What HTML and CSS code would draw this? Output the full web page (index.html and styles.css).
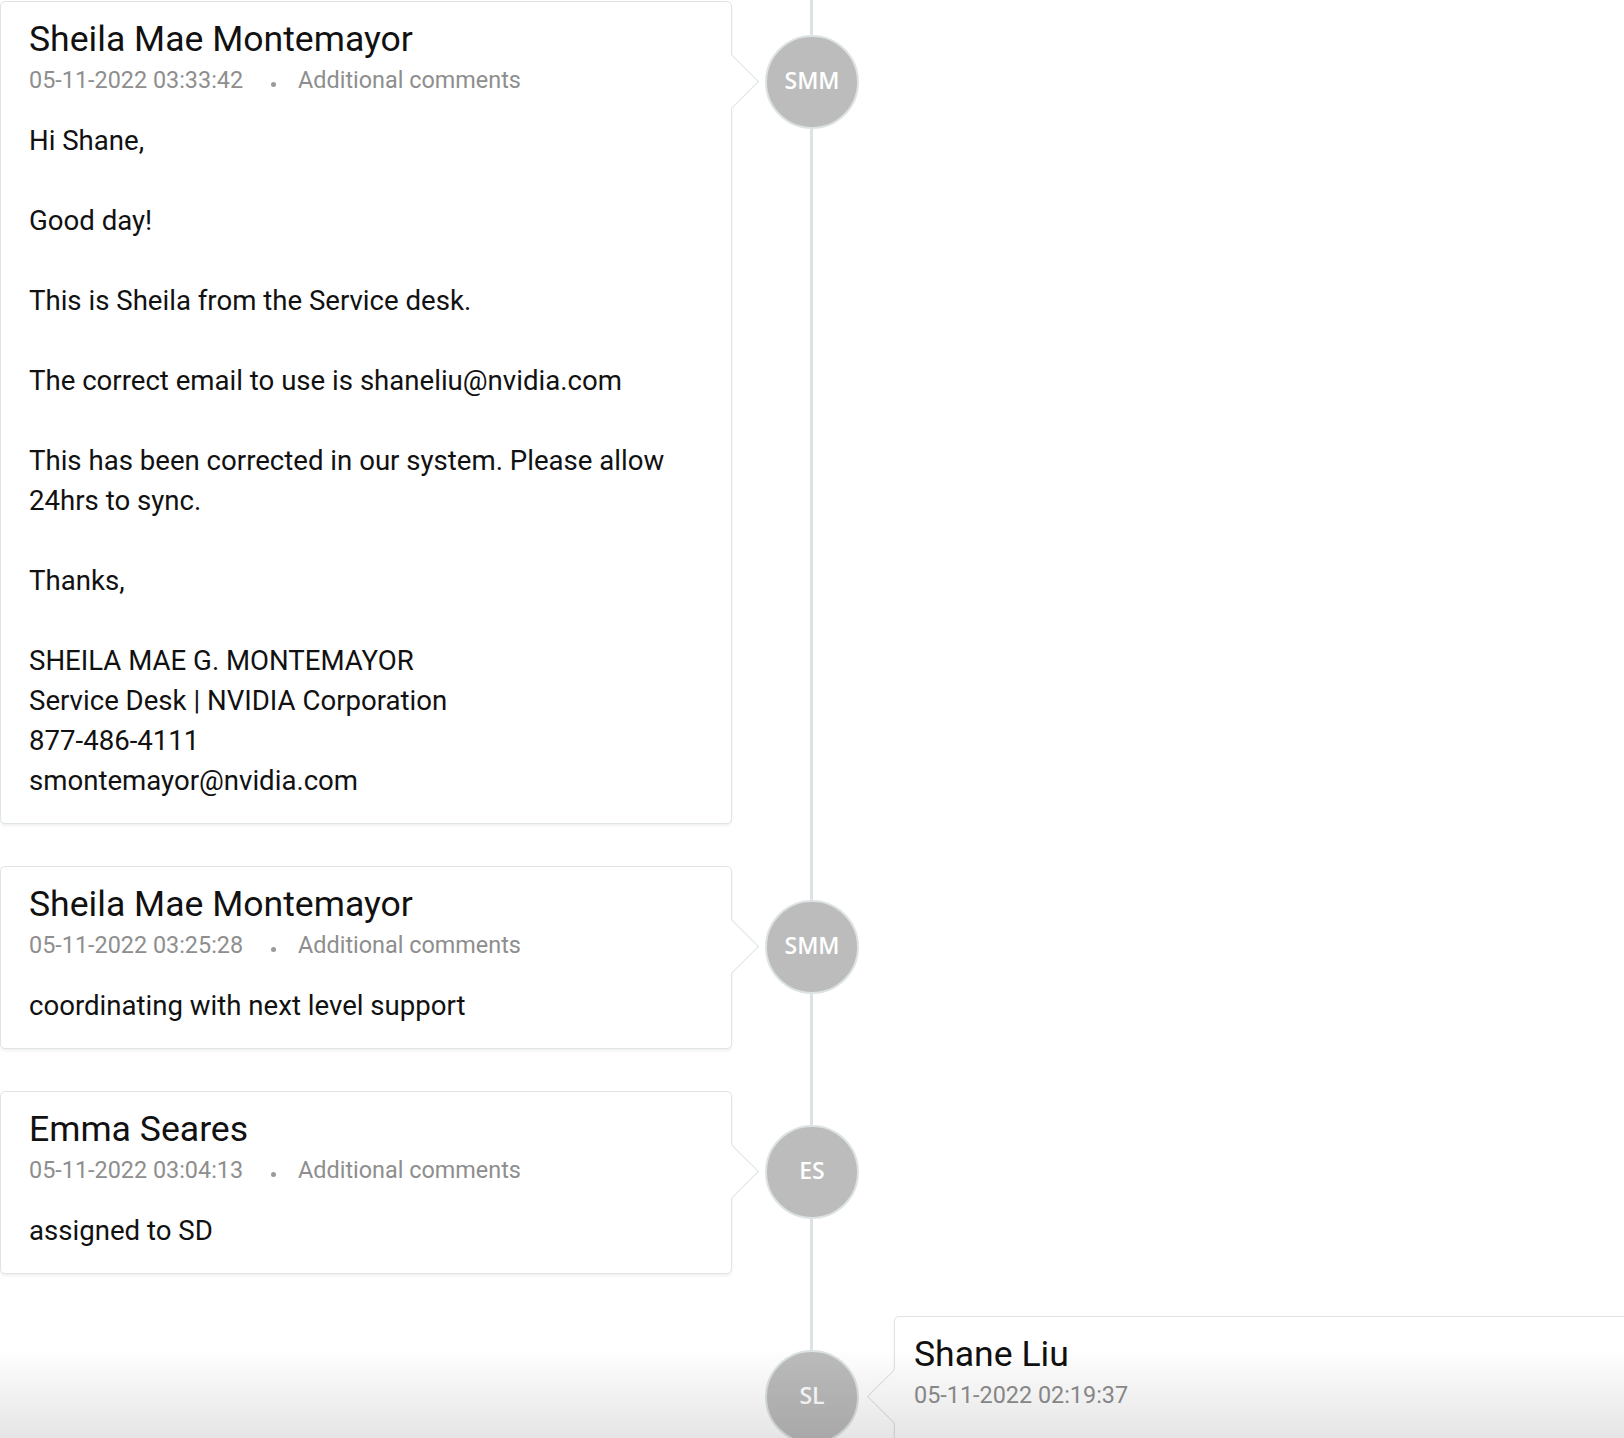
FILE: index.html
```html
<!DOCTYPE html>
<html lang="en">
<head>
<meta charset="utf-8">
<title>Activity timeline</title>
<link rel="stylesheet" href="styles.css">
</head>
<body>
<main class="timeline">
  <section class="entry entry-left">
    <article class="card card-left">
      <h3 class="card-title">Sheila Mae Montemayor</h3>
      <div class="card-meta"><span>05-11-2022 03:33:42</span><span class="dot"></span><span>Additional comments</span></div>
      <div class="card-body">
        <p>Hi Shane,</p>
        <p>Good day!</p>
        <p>This is Sheila from the Service desk.</p>
        <p>The correct email to use is shaneliu@nvidia.com</p>
        <p>This has been corrected in our system. Please allow 24hrs to sync.</p>
        <p>Thanks,</p>
        <p>SHEILA MAE G. MONTEMAYOR<br>Service Desk | NVIDIA Corporation<br>877-486-4111<br>smontemayor@nvidia.com</p>
      </div>
    </article>
    <div class="avatar">SMM</div>
  </section>

  <section class="entry entry-left">
    <article class="card card-left">
      <h3 class="card-title">Sheila Mae Montemayor</h3>
      <div class="card-meta"><span>05-11-2022 03:25:28</span><span class="dot"></span><span>Additional comments</span></div>
      <div class="card-body">
        <p>coordinating with next level support</p>
      </div>
    </article>
    <div class="avatar">SMM</div>
  </section>

  <section class="entry entry-left">
    <article class="card card-left">
      <h3 class="card-title">Emma Seares</h3>
      <div class="card-meta"><span>05-11-2022 03:04:13</span><span class="dot"></span><span>Additional comments</span></div>
      <div class="card-body">
        <p>assigned to SD</p>
      </div>
    </article>
    <div class="avatar">ES</div>
  </section>

  <section class="entry entry-right">
    <div class="avatar">SL</div>
    <article class="card card-right">
      <h3 class="card-title">Shane Liu</h3>
      <div class="card-meta"><span>05-11-2022 02:19:37</span></div>
    </article>
  </section>
</main>
<div class="fade"></div>
</body>
</html>
```
FILE: styles.css
```css
html, body {
  margin: 0;
  padding: 0;
  height: 1438px;
  overflow: hidden;
  background: #ffffff;
}

body {
  font-family: Roboto, "Noto Sans", sans-serif;
  color: #111111;
}

.timeline {
  display: flex;
  flex-direction: column;
  gap: 42px;
  padding-top: 1px;
  min-height: 1438px;
  box-sizing: border-box;
  background: linear-gradient(#dce3e4, #dce3e4) no-repeat 810px 0 / 3px 100%;
}

.entry {
  display: grid;
  grid-template-columns: 732px 160px 742px;
  align-items: start;
}

.entry-left .card { grid-column: 1; }
.entry-left .avatar { grid-column: 2; grid-row: 1; }
.entry-right .avatar { grid-column: 2; grid-row: 1; }
.entry-right .card { grid-column: 3; grid-row: 1; margin-left: 2px; }

.card {
  position: relative;
  background: #ffffff;
  border: 1px solid #dfe4e6;
  border-radius: 5px;
  box-shadow: 0 2px 3px rgba(0, 0, 0, 0.06);
  padding: 15px 28px 22px;
}

.card-right {
  padding-left: 19px;
  min-height: 160px;
}

.card::before {
  content: "";
  position: absolute;
  top: 59.5px;
  width: 39px;
  height: 39px;
  box-sizing: border-box;
  background: #ffffff;
  transform: rotate(45deg);
}

.card-left::before {
  right: -20px;
  border-top: 1px solid #dfe4e6;
  border-right: 1px solid #dfe4e6;
}

.card-right::before {
  left: -20px;
  border-bottom: 1px solid #dfe4e6;
  border-left: 1px solid #dfe4e6;
}

.card-title,
.card-meta,
.card-body {
  position: relative;
}

.card-title {
  margin: 0;
  font-size: 35.6px;
  line-height: 44px;
  font-weight: 400;
  color: #111111;
}

.card-meta {
  margin-top: 4px;
  font-size: 23.4px;
  line-height: 30px;
  color: #8e8e8e;
  display: flex;
  align-items: baseline;
}

.dot {
  display: inline-block;
  width: 5px;
  height: 5px;
  border-radius: 50%;
  background: #9a9a9a;
  margin: 0 22px 0 28px;
  position: relative;
  top: -1px;
}

.card-body {
  margin-top: 26px;
  font-size: 27.6px;
  line-height: 40px;
  color: #111111;
}

.card-body p {
  margin: 0 0 40px;
}

.card-body p:last-child {
  margin-bottom: 0;
}

.avatar {
  justify-self: center;
  margin-top: 34px;
  width: 94px;
  height: 94px;
  box-sizing: border-box;
  border: 2px solid #dde3e4;
  border-radius: 50%;
  background: #bcbcbc;
  color: #ffffff;
  font-family: "Open Sans", sans-serif;
  font-size: 23px;
  font-weight: 600;
  padding-bottom: 4px;
  display: flex;
  align-items: center;
  justify-content: center;
}

.fade {
  position: fixed;
  left: 0;
  right: 0;
  bottom: 0;
  height: 90px;
  background: linear-gradient(rgba(0, 0, 0, 0), rgba(0, 0, 0, 0.1));
  pointer-events: none;
}
```
